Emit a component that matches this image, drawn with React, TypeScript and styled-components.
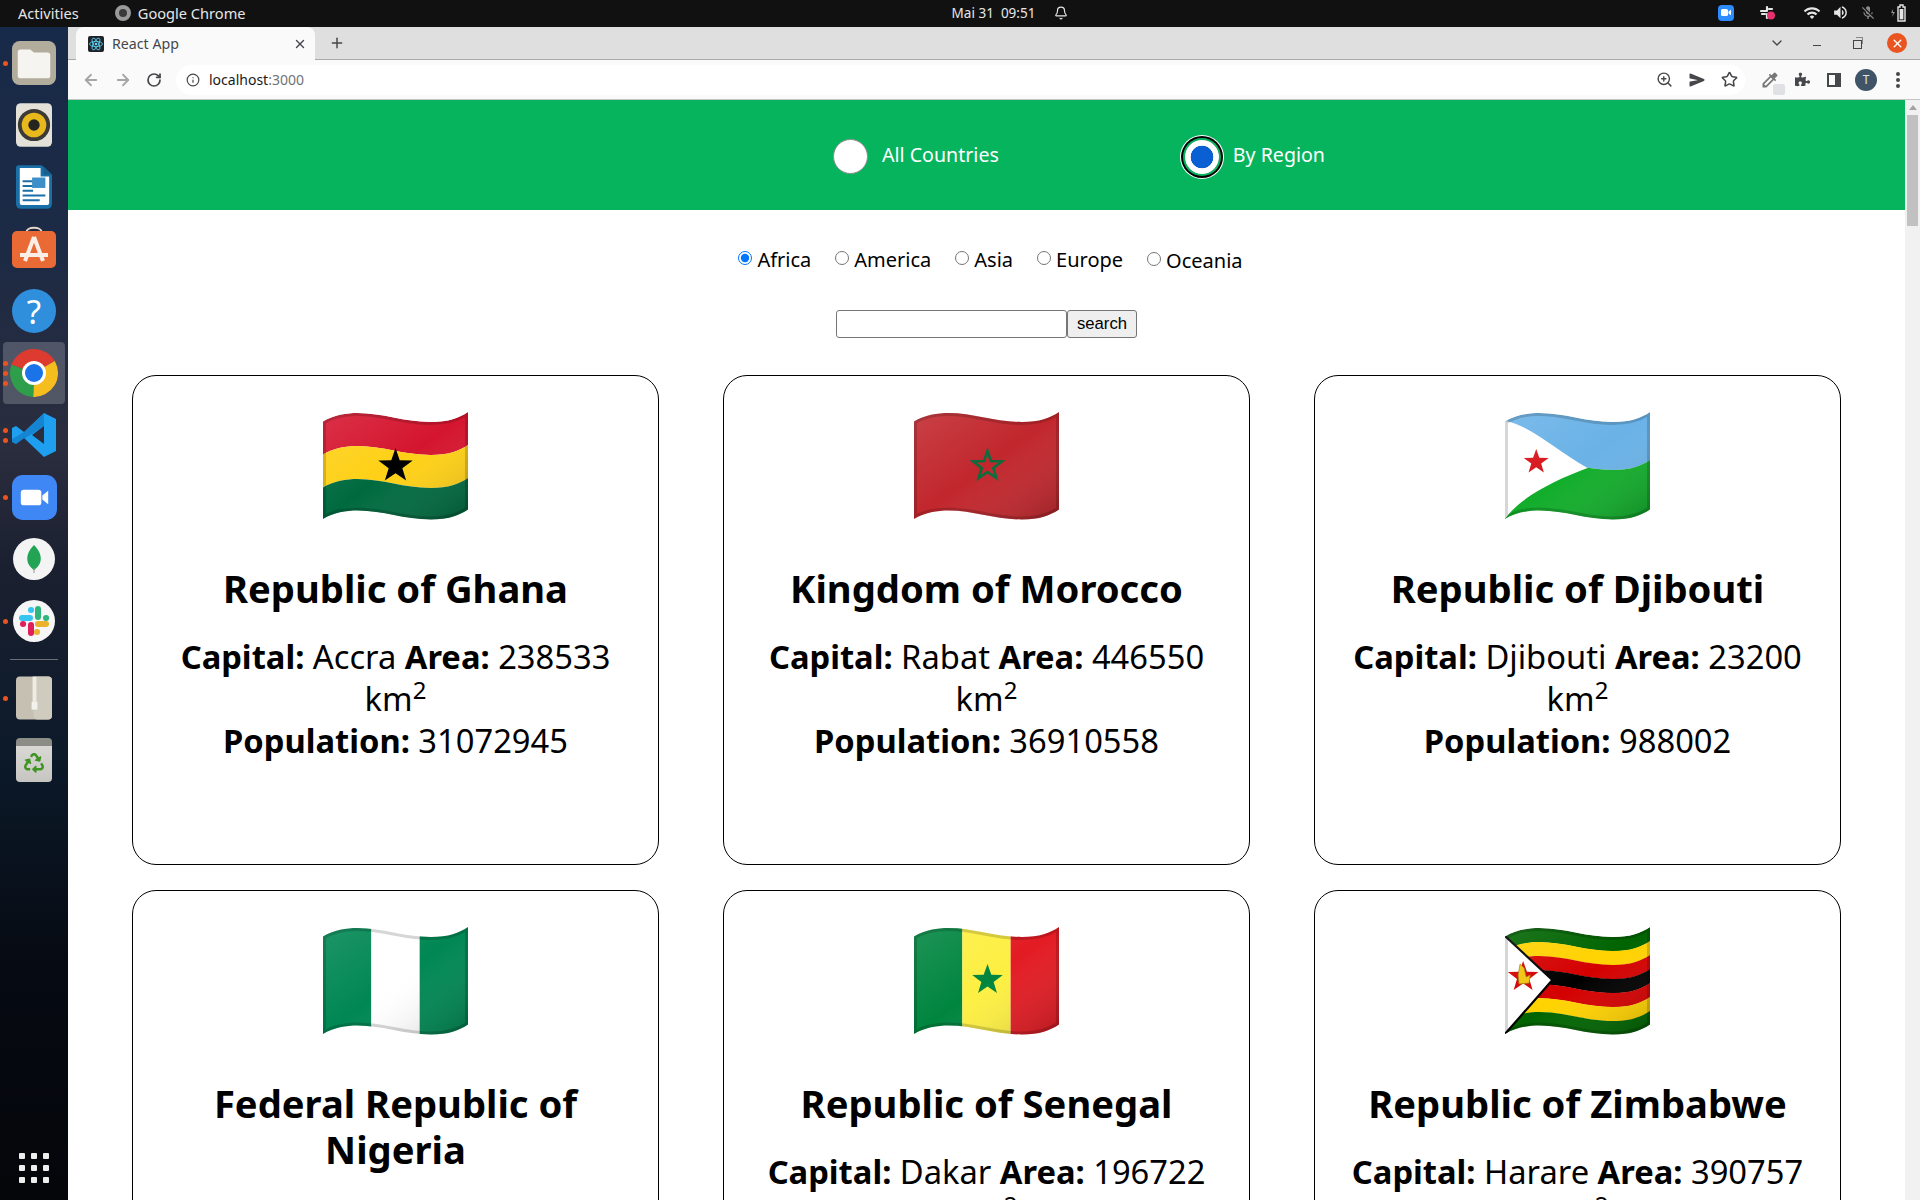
import type { ReactNode } from "react";
import styled, { createGlobalStyle } from "styled-components";
import { ArrowLeft, ArrowRight, Bell, ChevronDown, Info, Plus, RotateCw, Star, X, ZoomIn } from "lucide-react";
import { FaPuzzlePiece, FaRecycle } from "react-icons/fa";
import { IoSend } from "react-icons/io5";
import { MdColorize, MdMicOff, MdVolumeUp, MdWifi } from "react-icons/md";

const UI_FONT = `"Noto Sans", "Open Sans", sans-serif`;

const GlobalStyle = createGlobalStyle`
  html, body {
    margin: 0;
    padding: 0;
    height: 100%;
    overflow: hidden;
    font-family: ${UI_FONT};
  }
`;

const Screen = styled.div`
  width: 1920px;
  height: 1200px;
  display: flex;
  flex-direction: column;
  overflow: hidden;
  background: #000;
`;

/* ---------- gnome top bar ---------- */

const TopBar = styled.div`
  height: 27px;
  flex: none;
  box-sizing: border-box;
  background: #111112;
  color: #e6e6e6;
  font-size: 14.6px;
  display: grid;
  grid-template-columns: 1fr auto 1fr;
  align-items: center;
  padding: 0 18px 2px;
`;

const TopLeft = styled.div`
  display: flex;
  align-items: center;
  gap: 36px;
`;

const AppName = styled.div`
  display: flex;
  align-items: center;
  gap: 7px;
`;

const AppDot = styled.span`
  width: 16px;
  height: 16px;
  box-sizing: border-box;
  border-radius: 50%;
  border: 4px solid #9a9a9a;
  background: #3a3a3a;
`;

const Clock = styled.div`
  display: flex;
  align-items: center;
  gap: 19px;
  margin-left: 100px;
  font-size: 13.5px;
`;

const TopRight = styled.div`
  display: flex;
  align-items: center;
  justify-content: flex-end;
  gap: 11px;
  margin-right: -6px;
`;

const Tray = styled.span<{ $gap?: number }>`
  display: flex;
  margin-right: ${(p) => p.$gap ?? 0}px;
`;

const ZoomTray = styled.span`
  width: 16px;
  height: 16px;
  border-radius: 4px;
  background: #2d8cff;
  display: flex;
  align-items: center;
  justify-content: center;
`;

/* ---------- dock ---------- */

const Body = styled.div`
  flex: 1;
  min-height: 0;
  display: flex;
`;

const Dock = styled.div`
  width: 68px;
  flex: none;
  display: flex;
  flex-direction: column;
  padding: 5px 0 17px;
  box-sizing: border-box;
  background: linear-gradient(180deg, #182a49 0%, #1c2a45 18%, #2a2d3d 36%, #1b2030 46%, #0c1a2a 62%, #060a12 80%, #04060a 100%);
`;

const DockSlot = styled.div<{ $active?: boolean }>`
  position: relative;
  height: 62px;
  flex: none;
  display: flex;
  align-items: center;
  justify-content: center;
  &::before {
    content: "";
    display: ${(p) => (p.$active ? "block" : "none")};
    position: absolute;
    left: 3px;
    right: 3px;
    top: 0;
    bottom: 0;
    border-radius: 4px;
    background: rgba(255, 255, 255, 0.2);
  }
  svg {
    position: relative;
  }
`;

const RunDots = styled.div`
  position: absolute;
  left: 3px;
  top: 0;
  bottom: 0;
  display: flex;
  flex-direction: column;
  justify-content: center;
  gap: 5px;
`;

const RunDot = styled.span`
  width: 5px;
  height: 5px;
  border-radius: 50%;
  background: #e95420;
`;

const DockRule = styled.div`
  height: 1px;
  flex: none;
  margin: 7px 10px 7px;
  background: #6b6e74;
`;

const AppGrid = styled.div`
  margin: auto auto 0;
  display: grid;
  grid-template-columns: repeat(3, 6px);
  gap: 6px;
`;

const GridCell = styled.span`
  width: 6px;
  height: 6px;
  border-radius: 1px;
  background: #eeeeee;
`;

/* ---------- chrome ---------- */

const Browser = styled.div`
  flex: 1;
  min-width: 0;
  display: flex;
  flex-direction: column;
`;

const TabStrip = styled.div`
  height: 33px;
  flex: none;
  background: #dfdfdf;
  box-sizing: border-box;
  border-bottom: 1px solid #a9a9a9;
  display: flex;
  align-items: flex-end;
  padding-left: 8px;
  color: #45474a;
`;

const Tab = styled.div`
  width: 239px;
  height: 33px;
  margin-bottom: -1px;
  box-sizing: border-box;
  background: #fafafa;
  border-radius: 8px 8px 0 0;
  display: flex;
  align-items: center;
  padding: 0 8px 0 12px;
  font-size: 14.2px;
  gap: 8px;
`;

const TabTitle = styled.span`
  flex: 1;
`;

const StripButton = styled.span<{ $left?: number }>`
  align-self: center;
  display: flex;
  margin-left: ${(p) => p.$left ?? 0}px;
`;

const StripControls = styled.div`
  margin-left: auto;
  margin-right: 13px;
  align-self: center;
  display: grid;
  grid-template-columns: repeat(4, 20px);
  column-gap: 20px;
  align-items: center;
  justify-items: center;
`;

const MinimizeMark = styled.span`
  width: 8px;
  height: 1px;
  margin-top: 4px;
  background: #444;
`;

const RestoreMark = styled.span`
  position: relative;
  width: 7px;
  height: 7px;
  margin: 2px 0 0 0;
  border: 1px solid #444;
  &::after {
    content: "";
    position: absolute;
    left: 2px;
    top: -4px;
    width: 6px;
    height: 6px;
    border-top: 1px solid #888;
    border-right: 1px solid #888;
  }
`;

const CloseCircle = styled.span`
  width: 20px;
  height: 20px;
  border-radius: 50%;
  background: #e95420;
  color: #fff;
  display: flex;
  align-items: center;
  justify-content: center;
`;

const Toolbar = styled.div`
  height: 40px;
  flex: none;
  box-sizing: border-box;
  background: #fafafa;
  border-bottom: 1px solid #c4c4c4;
  display: flex;
  align-items: center;
  padding-left: 14px;
  color: #45474a;
`;

const NavButton = styled.span<{ $muted?: boolean }>`
  width: 32px;
  display: flex;
  justify-content: flex-start;
  color: ${(p) => (p.$muted ? "#a6a6a6" : "#45474a")};
`;

const Omnibox = styled.div`
  width: 1569px;
  height: 30px;
  margin-left: -2px;
  flex: none;
  box-sizing: border-box;
  background: #ffffff;
  border-radius: 15px;
  display: flex;
  align-items: center;
  padding: 0 7px 0 10px;
  gap: 9px;
  font-size: 14px;
`;

const Url = styled.span`
  flex: 1;
  color: #1a1a1a;
  span {
    color: #6f7377;
  }
`;

const OmniIcons = styled.div`
  display: flex;
  align-items: center;
  gap: 16px;
`;

const Extensions = styled.div`
  display: grid;
  grid-template-columns: repeat(5, 32px);
  align-items: center;
  justify-items: center;
  margin-left: 9px;
`;

const Dropper = styled.span`
  position: relative;
  display: flex;
  color: #777;
`;

const DropperBadge = styled.i`
  position: absolute;
  right: -5px;
  bottom: -5px;
  width: 12px;
  height: 11px;
  border-radius: 2px;
  background: #dfe1e5;
`;

const Avatar = styled.span`
  width: 22px;
  height: 22px;
  border-radius: 50%;
  background: #3f5567;
  color: #dfe5ea;
  font-size: 12px;
  display: flex;
  align-items: center;
  justify-content: center;
`;

const Kebab = styled.span`
  display: flex;
  flex-direction: column;
  gap: 2px;
  i {
    width: 4px;
    height: 4px;
    border-radius: 50%;
    background: #45474a;
  }
`;

/* ---------- page ---------- */

const Viewport = styled.div`
  flex: 1;
  min-height: 0;
  display: flex;
`;

const Page = styled.div`
  flex: 1;
  min-width: 0;
  background: #ffffff;
  overflow: hidden;
  color: #000;
`;

const ScrollTrack = styled.div`
  width: 15px;
  flex: none;
  background: #f1f1f1;
  display: flex;
  flex-direction: column;
  align-items: center;
`;

const ScrollArrow = styled.span`
  margin-top: 5px;
  width: 0;
  height: 0;
  border-left: 4px solid transparent;
  border-right: 4px solid transparent;
  border-bottom: 5px solid #a3a3a3;
`;

const ScrollThumb = styled.span`
  width: 11px;
  height: 111px;
  margin-top: 5px;
  background: #c1c1c1;
`;

const ModeBar = styled.div`
  height: 110px;
  box-sizing: border-box;
  background: #06b45e;
  display: flex;
  align-items: center;
  padding: 3px 0 0 765px;
  gap: 181px;
`;

const ModeLabel = styled.label`
  display: flex;
  align-items: center;
  gap: 14px;
  color: #fff;
  font-size: 19.6px;
`;

const ModeText = styled.span`
  margin-bottom: 4px;
`;

const ModeRadio = styled.input`
  appearance: none;
  width: 35px;
  height: 35px;
  margin: 0;
  box-sizing: border-box;
  border-radius: 50%;
  border: 1px solid #8d8d8d;
  background: #fff;
  &:checked {
    width: 34px;
    height: 34px;
    margin: 0 0 0 5px;
    border: none;
    background: radial-gradient(circle, #0a5fd3 0 11px, #ffffff 11.6px);
    box-shadow: 0 0 0 2px #06b45e, 0 0 0 4px #000, 0 0 0 5px #fff;
  }
`;

const RegionRow = styled.div`
  display: flex;
  justify-content: center;
  align-items: center;
  gap: 24px;
  padding: 37px 0 0 8px;
  height: 24px;
`;

const RegionLabel = styled.label`
  display: flex;
  align-items: center;
  font-size: 20px;
  input {
    margin: 0 5px 2px 0;
    width: 14px;
    height: 14px;
  }
  &:last-child {
    padding-top: 2px;
  }
`;

const SearchRow = styled.form`
  display: flex;
  justify-content: center;
  margin-top: 39px;
`;

const SearchInput = styled.input`
  width: 231px;
  height: 28px;
  box-sizing: border-box;
  border: 1px solid #767676;
  border-radius: 3px;
  padding: 1px 2px;
`;

const SearchButton = styled.button`
  width: 70px;
  height: 28px;
  box-sizing: border-box;
  border: 1px solid #767676;
  border-radius: 3px;
  background: #efefef;
  font-family: "Liberation Sans", sans-serif;
  font-size: 16.7px;
  padding: 0;
  color: #000;
`;

const CardGrid = styled.div`
  display: grid;
  grid-template-columns: repeat(3, 527px);
  justify-content: center;
  column-gap: 64px;
  row-gap: 25px;
  margin-top: 37px;
`;

const Card = styled.article`
  height: 490px;
  box-sizing: border-box;
  border: 1px solid #000;
  border-radius: 24px;
  padding: 36px 30px 0;
  text-align: center;
`;

const FlagSvg = styled.svg`
  display: block;
  margin: 0 auto;
`;

const CardTitle = styled.h2`
  margin: 45px 0 25px;
  font-size: 38.2px;
  line-height: 46px;
  font-weight: 700;
`;

const CardFacts = styled.p`
  margin: 0;
  font-size: 32.7px;
  line-height: 42px;
  sup {
    font-size: 24px;
    line-height: 0;
  }
`;

/* ---------- flags ---------- */

// the waved outline of a noto flag, shifted down by a and b
const band = (a: number, b: number) =>
  `M0 ${9.5 + a}C10 ${3 + a} 24 ${1 + a} 34 ${1 + a}C60 ${1 + a} 80 ${10 + a} 107 ${10 + a}C125 ${10 + a} 135 ${6 + a} 144 ${a}` +
  `L144 ${b}C135 ${6 + b} 125 ${10 + b} 107 ${10 + b}C80 ${10 + b} 60 ${1 + b} 34 ${1 + b}C24 ${1 + b} 10 ${3 + b} 0 ${9.5 + b}Z`;

const OUTLINE = band(0, 97.5);

const star = (cx: number, cy: number, R: number) => {
  const pts: string[] = [];
  for (let i = 0; i < 10; i++) {
    const r = i % 2 ? R * 0.4 : R;
    const a = -Math.PI / 2 + (i * Math.PI) / 5;
    pts.push(`${(cx + r * Math.cos(a)).toFixed(1)},${(cy + r * Math.sin(a)).toFixed(1)}`);
  }
  return pts.join(" ");
};

const Flag = ({ id, children }: { id: string; children: ReactNode }) => (
  <FlagSvg width="145" height="108" viewBox="0 0 144 108" preserveAspectRatio="none">
    <defs>
      <clipPath id={`clip-${id}`}>
        <path d={OUTLINE} />
      </clipPath>
      <linearGradient id={`shade-${id}`} x1="0" y1="0" x2="1" y2="1">
        <stop offset="0" stopColor="#fff" stopOpacity="0.12" />
        <stop offset="0.5" stopColor="#fff" stopOpacity="0" />
        <stop offset="1" stopColor="#000" stopOpacity="0.2" />
      </linearGradient>
    </defs>
    <g clipPath={`url(#clip-${id})`}>
      {children}
      <rect width="144" height="108" fill={`url(#shade-${id})`} />
      <path d={OUTLINE} fill="none" stroke="#000" strokeOpacity="0.16" strokeWidth="6" />
    </g>
  </FlagSvg>
);

const ghana = (
  <>
    <path d={band(0, 33)} fill="#d5152f" />
    <path d={band(33, 66)} fill="#fed016" />
    <path d={band(66, 98)} fill="#006a3f" />
    <polygon points={star(72, 54, 18)} fill="#000" />
  </>
);

const morocco = (
  <>
    <rect width="144" height="108" fill="#c1272d" />
    <polygon points={star(73, 54, 15)} fill="none" stroke="#0b6a3a" strokeWidth="2.6" />
  </>
);

const djibouti = (
  <>
    <path d={band(0, 48)} fill="#6ab2e7" />
    <path d={band(48, 98)} fill="#12ad2b" />
    <path d="M0 9C25 13 50 38 82 56C50 68 15 85 0 107Z" fill="#fff" />
    <polygon points={star(31, 50, 13)} fill="#d7141a" />
  </>
);

const nigeria = (
  <>
    <rect width="48" height="108" fill="#008753" />
    <rect x="48" width="48" height="108" fill="#fff" />
    <rect x="96" width="48" height="108" fill="#008753" />
  </>
);

const senegal = (
  <>
    <rect width="48" height="108" fill="#00853f" />
    <rect x="48" width="48" height="108" fill="#fdef42" />
    <rect x="96" width="48" height="108" fill="#e31b23" />
    <polygon points={star(73, 53, 16)} fill="#00853f" />
  </>
);

const zimbabwe = (
  <>
    {["#006400", "#ffd200", "#d40000", "#000", "#d40000", "#ffd200", "#006400"].map((c, i) => (
      <path key={i} d={band(i * 14, (i + 1) * 14 + 0.3)} fill={c} />
    ))}
    <path d="M0 9L47 53L0 107Z" fill="#fff" />
    <path d="M0 9L47 53L0 107" fill="none" stroke="#000" strokeWidth="2.2" />
    <polygon points={star(18, 50, 16)} fill="#d40000" />
    <path d="M13 48L15 37L19 41L21 50L25 48L24 56L14 57Z" fill="#f1c40f" stroke="#9a7d0a" strokeWidth="0.7" />
  </>
);

/* ---------- dock icons ---------- */

const sector = (r: number, a0: number, a1: number) => {
  const p = (a: number) => `${(24 + r * Math.cos((a * Math.PI) / 180)).toFixed(2)} ${(24 + r * Math.sin((a * Math.PI) / 180)).toFixed(2)}`;
  return `M24 24L${p(a0)}A${r} ${r} 0 0 1 ${p(a1)}Z`;
};

const FilesIcon = () => (
  <svg width="44" height="44" viewBox="0 0 46 46">
    <rect width="46" height="46" rx="8" fill="#b2ac9c" />
    <path d="M6 12a3 3 0 0 1 3-3h10l4 3h14a3 3 0 0 1 3 3v21a3 3 0 0 1-3 3H9a3 3 0 0 1-3-3Z" fill="#f5f4f1" />
  </svg>
);

const RhythmIcon = () => (
  <svg width="36" height="44" viewBox="0 0 38 46">
    <rect width="38" height="46" rx="5" fill="#e4e1d8" />
    <circle cx="19" cy="23" r="17" fill="#3c3a36" />
    <circle cx="19" cy="23" r="13" fill="#e7b91c" />
    <circle cx="19" cy="23" r="6" fill="#26241f" />
  </svg>
);

const WriterIcon = () => (
  <svg width="36" height="44" viewBox="0 0 38 46">
    <path d="M3 0H27L38 10V41a5 5 0 0 1-5 5H5a5 5 0 0 1-5-5V3a3 3 0 0 1 3-3Z" fill="#1a6fa6" />
    <path d="M4 3H26V12H35V40a2 2 0 0 1-2 2H6a2 2 0 0 1-2-2Z" fill="#fff" />
    <path d="M29 1L38 10H29Z" fill="#17608f" />
    <path d="M7 16H18V18H7ZM7 21H18V23H7ZM7 26H18V28H7ZM7 31H31V33H7ZM7 36H25V38H7Z" fill="#1a6fa6" />
    <rect x="17" y="13" width="14" height="11" fill="#3d8fc7" />
  </svg>
);

const StoreIcon = () => (
  <svg width="44" height="46" viewBox="0 0 44 46">
    <path d="M14 7C14 0 30 0 30 7" fill="none" stroke="#e8d8c6" strokeWidth="2" />
    <rect y="5" width="44" height="37" rx="5" fill="#ea6a36" />
    <path d="M22 11L13 35M22 11L31 35M8 29H36" stroke="#fbeee6" strokeWidth="4" fill="none" />
  </svg>
);

const HelpCircle = styled.span`
  width: 44px;
  height: 44px;
  border-radius: 50%;
  background: #2f8fdc;
  color: #fff;
  font-size: 33px;
  display: flex;
  align-items: center;
  justify-content: center;
`;

const ChromeIcon = () => (
  <svg width="48" height="48" viewBox="0 0 48 48">
    <path d={sector(24, -160, -30)} fill="#dd3b2f" />
    <path d={sector(24, -30, 92)} fill="#f6bd1f" />
    <path d={sector(24, 92, 200)} fill="#2f9e4a" />
    <circle cx="24" cy="24" r="12" fill="#fff" />
    <circle cx="24" cy="24" r="9" fill="#1a73e8" />
  </svg>
);

const CodeIcon = () => (
  <svg width="44" height="44" viewBox="0 0 44 44">
    <path d="M32 0L44 6V38L32 44L12 25L4 31L0 29V15L4 13L12 19ZM32 13L20 22L32 31Z" fill="#1f9ff0" />
    <path d="M32 0V13L4 31L0 29V26L12 19Z" fill="#0d6fb8" opacity="0.55" />
  </svg>
);

const ZoomIcon = () => (
  <svg width="45" height="45" viewBox="0 0 46 46">
    <rect width="46" height="46" rx="11" fill="#3f87f5" />
    <rect x="9" y="15" width="21" height="16" rx="3" fill="#fff" />
    <path d="M31 21L37 16V30L31 25Z" fill="#fff" />
  </svg>
);

const MongoIcon = () => (
  <svg width="42" height="42" viewBox="0 0 42 42">
    <circle cx="21" cy="21" r="21" fill="#f4f4f4" />
    <path d="M21 7C27 13 29 19 27 25C26 28 23 30 21.5 32H20.5C19 30 16 28 15 25C13 19 15 13 21 7Z" fill="#22a454" />
    <rect x="20.5" y="30" width="1" height="5" fill="#9a9a8e" />
  </svg>
);

const SlackIcon = () => (
  <svg width="42" height="42" viewBox="0 0 42 42">
    <circle cx="21" cy="21" r="21" fill="#f6f6f6" />
    <g strokeWidth="6" strokeLinecap="round" fill="none">
      <path d="M9 18H17" stroke="#36c5f0" />
      <path d="M18 10H18.1" stroke="#36c5f0" />
      <path d="M25 9V17" stroke="#2eb67d" />
      <path d="M33 18H33.1" stroke="#2eb67d" />
      <path d="M25 24H33" stroke="#ecb22e" />
      <path d="M24 32H24.1" stroke="#ecb22e" />
      <path d="M18 25V33" stroke="#e01e5a" />
      <path d="M10 24H10.1" stroke="#e01e5a" />
    </g>
  </svg>
);

const ArchiveIcon = () => (
  <svg width="36" height="44" viewBox="0 0 37 44">
    <rect width="37" height="44" rx="4" fill="#c5c0b1" />
    <rect x="18" width="19" height="44" rx="4" fill="#cfcbbe" />
    <path d="M17 0H21V26H17Z" fill="#efece6" />
    <rect x="16" y="26" width="6" height="8" fill="#f3f1ec" />
  </svg>
);

const TrashBox = styled.span`
  position: relative;
  width: 36px;
  height: 44px;
  border-radius: 4px;
  background: linear-gradient(180deg, #8d8d88 0 18%, #d9d8d4 18%, #c6c5c1 100%);
  display: flex;
  align-items: flex-end;
  justify-content: center;
  padding-bottom: 9px;
  box-sizing: border-box;
  color: #3e9422;
`;

const BatteryIcon = () => (
  <svg width="18" height="18" viewBox="0 0 18 18">
    <path d="M3 5L1 9H3L2 13L5 8H3Z" fill="#8d8d8d" />
    <path d="M10 1H13V3H15V17H8V3H10Z" fill="none" stroke="#e6e6e6" strokeWidth="1.4" />
    <rect x="9.6" y="5" width="3.8" height="10.4" fill="#e6e6e6" />
  </svg>
);

const dockApps: { icon: ReactNode; dots?: number; active?: boolean }[] = [
  { icon: <FilesIcon />, dots: 1 },
  { icon: <RhythmIcon /> },
  { icon: <WriterIcon /> },
  { icon: <StoreIcon /> },
  { icon: <HelpCircle>?</HelpCircle> },
  { icon: <ChromeIcon />, dots: 3, active: true },
  { icon: <CodeIcon />, dots: 2 },
  { icon: <ZoomIcon />, dots: 1 },
  { icon: <MongoIcon /> },
  { icon: <SlackIcon />, dots: 1 },
];

const Slot = ({ icon, dots = 0, active }: { icon: ReactNode; dots?: number; active?: boolean }) => (
  <DockSlot $active={active}>
    {icon}
    {dots > 0 && (
      <RunDots>
        {Array.from({ length: dots }, (_, i) => (
          <RunDot key={i} />
        ))}
      </RunDots>
    )}
  </DockSlot>
);

const countries = [
  { id: "gh", name: "Republic of Ghana", capital: "Accra", area: 238533, population: 31072945, art: ghana },
  { id: "ma", name: "Kingdom of Morocco", capital: "Rabat", area: 446550, population: 36910558, art: morocco },
  { id: "dj", name: "Republic of Djibouti", capital: "Djibouti", area: 23200, population: 988002, art: djibouti },
  { id: "ng", name: "Federal Republic of Nigeria", capital: "Abuja", area: 923768, population: 206139587, art: nigeria },
  { id: "sn", name: "Republic of Senegal", capital: "Dakar", area: 196722, population: 16743930, art: senegal },
  { id: "zw", name: "Republic of Zimbabwe", capital: "Harare", area: 390757, population: 14862927, art: zimbabwe },
];

const regions = ["Africa", "America", "Asia", "Europe", "Oceania"];

const App = () => {
  return (
    <Screen>
      <GlobalStyle />
      <TopBar>
        <TopLeft>
          <span>Activities</span>
          <AppName>
            <AppDot />
            Google Chrome
          </AppName>
        </TopLeft>
        <Clock>
          <span>Mai 31 &nbsp;09:51</span>
          <Bell size={14} />
        </Clock>
        <TopRight>
          <Tray $gap={15}>
            <ZoomTray>
              <svg width="10" height="7" viewBox="0 0 10 7">
                <rect width="7" height="7" rx="1.5" fill="#fff" />
                <path d="M7.5 2.5L10 .8V6.2L7.5 4.5Z" fill="#fff" />
              </svg>
            </ZoomTray>
          </Tray>
          <Tray $gap={16}>
            <svg width="16" height="16" viewBox="0 0 16 16">
              <path d="M1 6H6M7 2V6M9 4H12M2 9H5M7 9V13" stroke="#e6e6e6" strokeWidth="2.2" strokeLinecap="round" />
              <circle cx="11" cy="10.5" r="4" fill="#e8306e" />
            </svg>
          </Tray>
          <MdWifi size={18} />
          <MdVolumeUp size={17} />
          <Tray $gap={3}>
            <MdMicOff size={16} color="#8d8d8d" />
          </Tray>
          <BatteryIcon />
        </TopRight>
      </TopBar>
      <Body>
        <Dock>
          {dockApps.map((a, i) => (
            <Slot key={i} {...a} />
          ))}
          <DockRule />
          <Slot icon={<ArchiveIcon />} dots={1} />
          <Slot
            icon={
              <TrashBox>
                <FaRecycle size={20} />
              </TrashBox>
            }
          />
          <AppGrid>
            {Array.from({ length: 9 }, (_, i) => (
              <GridCell key={i} />
            ))}
          </AppGrid>
        </Dock>
        <Browser>
          <TabStrip>
            <Tab>
              <svg width="16" height="16" viewBox="0 0 16 16">
                <rect width="16" height="16" rx="2" fill="#20232a" />
                <g fill="none" stroke="#61dafb" strokeWidth="0.8">
                  <ellipse cx="8" cy="8" rx="6.5" ry="2.6" />
                  <ellipse cx="8" cy="8" rx="6.5" ry="2.6" transform="rotate(60 8 8)" />
                  <ellipse cx="8" cy="8" rx="6.5" ry="2.6" transform="rotate(120 8 8)" />
                </g>
                <circle cx="8" cy="8" r="1.3" fill="#61dafb" />
              </svg>
              <TabTitle>React App</TabTitle>
              <X size={14} strokeWidth={2.4} />
            </Tab>
            <StripButton $left={14}>
              <Plus size={16} strokeWidth={2.2} />
            </StripButton>
            <StripControls>
              <ChevronDown size={16} />
              <MinimizeMark />
              <RestoreMark />
              <CloseCircle>
                <X size={13} strokeWidth={2.6} />
              </CloseCircle>
            </StripControls>
          </TabStrip>
          <Toolbar>
            <NavButton $muted>
              <ArrowLeft size={18} strokeWidth={2.4} />
            </NavButton>
            <NavButton $muted>
              <ArrowRight size={18} strokeWidth={2.4} />
            </NavButton>
            <NavButton>
              <RotateCw size={16} strokeWidth={2.6} />
            </NavButton>
            <Omnibox>
              <Info size={14} />
              <Url>
                localhost<span>:3000</span>
              </Url>
              <OmniIcons>
                <ZoomIn size={17} />
                <IoSend size={16} />
                <Star size={17} strokeWidth={2.2} />
              </OmniIcons>
            </Omnibox>
            <Extensions>
              <Dropper>
                <MdColorize size={20} />
                <DropperBadge />
              </Dropper>
              <FaPuzzlePiece size={15} />
              <svg width="14" height="14" viewBox="0 0 14 14">
                <path d="M0 0H14V14H0ZM2 2V12H8V2Z" fill="#45474a" fillRule="evenodd" />
              </svg>
              <Avatar>T</Avatar>
              <Kebab>
                <i />
                <i />
                <i />
              </Kebab>
            </Extensions>
          </Toolbar>
          <Viewport>
            <Page>
              <ModeBar>
                <ModeLabel>
                  <ModeRadio type="radio" name="mode" readOnly />
                  <ModeText>All Countries</ModeText>
                </ModeLabel>
                <ModeLabel>
                  <ModeRadio type="radio" name="mode" checked readOnly />
                  <ModeText>By Region</ModeText>
                </ModeLabel>
              </ModeBar>
              <RegionRow>
                {regions.map((r) => (
                  <RegionLabel key={r}>
                    <input type="radio" name="region" checked={r === "Africa"} readOnly />
                    {r}
                  </RegionLabel>
                ))}
              </RegionRow>
              <SearchRow>
                <SearchInput type="text" />
                <SearchButton type="button">search</SearchButton>
              </SearchRow>
              <CardGrid>
                {countries.map((c) => (
                  <Card key={c.id}>
                    <Flag id={c.id}>{c.art}</Flag>
                    <CardTitle>{c.name}</CardTitle>
                    <CardFacts>
                      <b>Capital:</b> {c.capital} <b>Area:</b> {c.area} km<sup>2</sup>
                      <br />
                      <b>Population:</b> {c.population}
                    </CardFacts>
                  </Card>
                ))}
              </CardGrid>
            </Page>
            <ScrollTrack>
              <ScrollArrow />
              <ScrollThumb />
            </ScrollTrack>
          </Viewport>
        </Browser>
      </Body>
    </Screen>
  );
};

export default App;
